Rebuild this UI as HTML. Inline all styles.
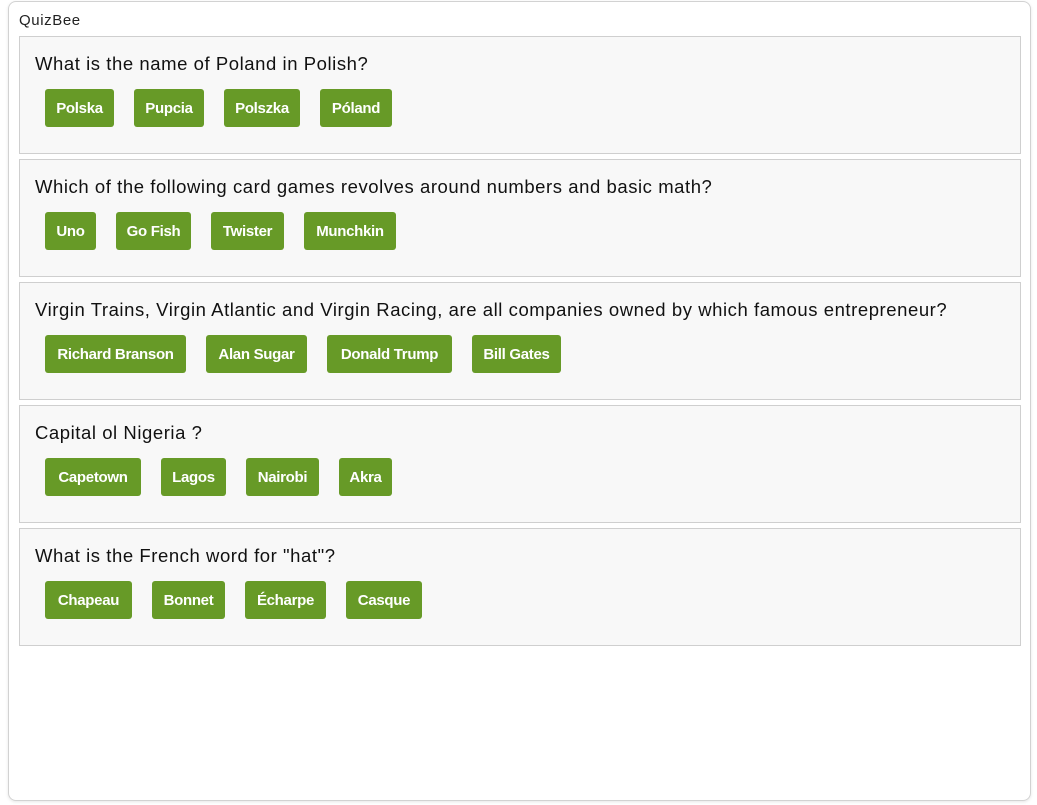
<!DOCTYPE html>
<html><head><meta charset="utf-8"><style>
html,body{margin:0;padding:0;background:#fff;width:1037px;height:805px;overflow:hidden;font-family:"Liberation Sans",sans-serif}
.card{position:absolute;left:8px;top:1px;width:1021px;height:798px;border:1px solid #d2d2d2;border-radius:8px;box-shadow:0 1px 3px rgba(0,0,0,.1)}
.title{position:absolute;left:19px;top:12px;font-size:15px;color:#222;letter-spacing:.6px}
.q{position:absolute;left:19px;width:1000px;height:116px;border:1px solid #cfcfcf;background:#f8f8f8}
.qt{position:absolute;left:15px;top:15px;font-size:18.5px;color:#111;line-height:24px;letter-spacing:.56px;white-space:nowrap}
.b{position:absolute;top:52px;height:38px;line-height:40px;background:#679a27;color:#fff;font-weight:bold;font-size:15px;text-align:center;border-radius:3px;letter-spacing:-.3px}
</style></head><body>
<div class="card"></div>
<div class="title">QuizBee</div>

<div class="q" style="top:36px"><div class="qt">What is the name of Poland in Polish?</div>
<div class="b" style="left:25px;width:69px">Polska</div><div class="b" style="left:114px;width:70px">Pupcia</div><div class="b" style="left:204px;width:76px">Polszka</div><div class="b" style="left:300px;width:72px">Póland</div></div>

<div class="q" style="top:159px"><div class="qt">Which of the following card games revolves around numbers and basic math?</div>
<div class="b" style="left:25px;width:51px">Uno</div><div class="b" style="left:96px;width:75px">Go Fish</div><div class="b" style="left:191px;width:73px">Twister</div><div class="b" style="left:284px;width:92px">Munchkin</div></div>

<div class="q" style="top:282px"><div class="qt">Virgin Trains, Virgin Atlantic and Virgin Racing, are all companies owned by which famous entrepreneur?</div>
<div class="b" style="left:25px;width:141px">Richard Branson</div><div class="b" style="left:186px;width:101px">Alan Sugar</div><div class="b" style="left:307px;width:125px">Donald Trump</div><div class="b" style="left:452px;width:89px">Bill Gates</div></div>

<div class="q" style="top:405px"><div class="qt">Capital ol Nigeria ?</div>
<div class="b" style="left:25px;width:96px">Capetown</div><div class="b" style="left:141px;width:65px">Lagos</div><div class="b" style="left:226px;width:73px">Nairobi</div><div class="b" style="left:319px;width:53px">Akra</div></div>

<div class="q" style="top:528px"><div class="qt">What is the French word for "hat"?</div>
<div class="b" style="left:25px;width:87px">Chapeau</div><div class="b" style="left:132px;width:73px">Bonnet</div><div class="b" style="left:225px;width:81px">Écharpe</div><div class="b" style="left:326px;width:76px">Casque</div></div>
</body></html>
